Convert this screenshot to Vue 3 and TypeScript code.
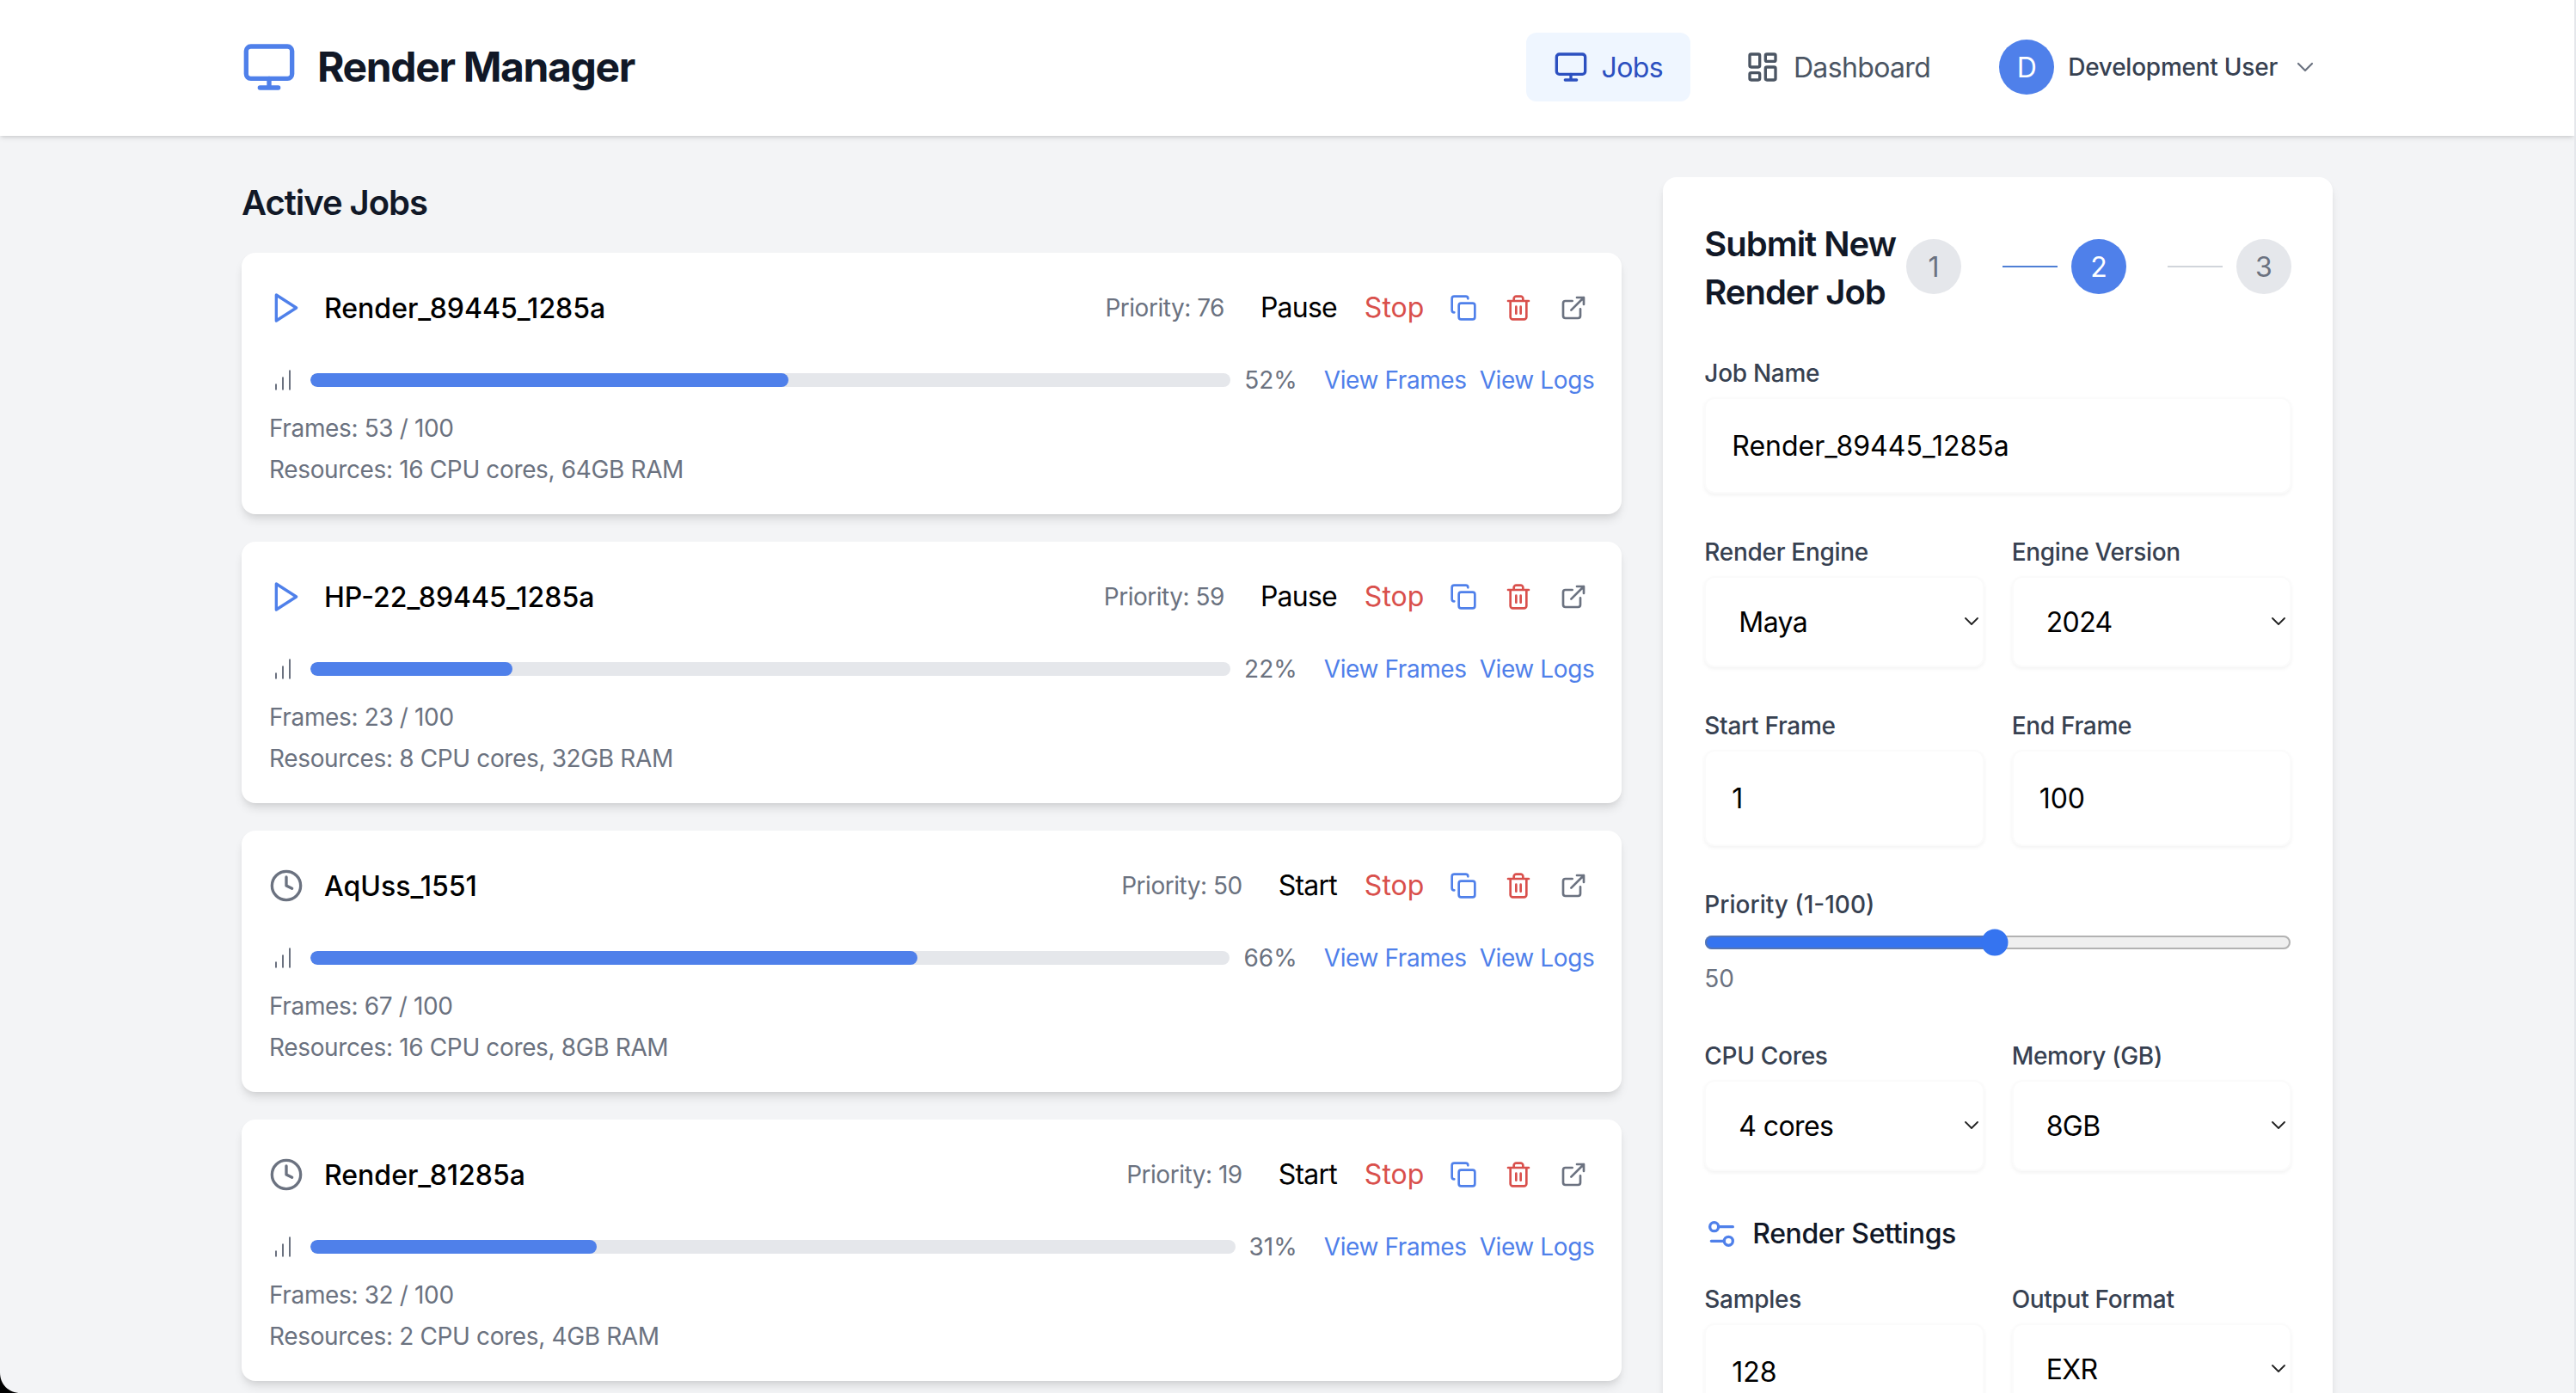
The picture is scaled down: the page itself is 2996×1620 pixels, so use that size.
<script setup lang="ts">
interface Job {
  name: string
  running: boolean
  priority: number
  action: string
  progress: number
  frames: number
  cores: number
  ram: number
}

const jobs: Job[] = [
  { name: 'Render_89445_1285a', running: true, priority: 76, action: 'Pause', progress: 52, frames: 53, cores: 16, ram: 64 },
  { name: 'HP-22_89445_1285a', running: true, priority: 59, action: 'Pause', progress: 22, frames: 23, cores: 8, ram: 32 },
  { name: 'AqUss_1551', running: false, priority: 50, action: 'Start', progress: 66, frames: 67, cores: 16, ram: 8 },
  { name: 'Render_81285a', running: false, priority: 19, action: 'Start', progress: 31, frames: 32, cores: 2, ram: 4 }
]
</script>

<template>
  <div class="page">
    <header class="topbar">
      <div class="topbar-inner">
        <div class="brand">
          <svg class="logo" viewBox="0 0 24 24"><rect x="2" y="3" width="20" height="14" rx="2" /><path d="M8 21h8M12 17v4" /></svg>
          <h1>Render Manager</h1>
        </div>
        <nav class="nav">
          <a class="nav-item active">
            <svg class="nav-icon" viewBox="0 0 24 24"><rect x="2" y="3" width="20" height="14" rx="2" /><path d="M8 21h8M12 17v4" /></svg>
            Jobs
          </a>
          <a class="nav-item">
            <svg class="nav-icon" viewBox="0 0 24 24"><rect x="3" y="3" width="7" height="9" rx="1" /><rect x="14" y="3" width="7" height="5" rx="1" /><rect x="14" y="12" width="7" height="9" rx="1" /><rect x="3" y="16" width="7" height="5" rx="1" /></svg>
            Dashboard
          </a>
          <div class="user">
            <span class="avatar">D</span>
            <span class="user-name">Development User</span>
            <svg class="user-chevron" viewBox="0 0 24 24"><path d="m6 9 6 6 6-6" /></svg>
          </div>
        </nav>
      </div>
    </header>

    <main class="content">
      <section class="jobs">
        <h2 class="heading">Active Jobs</h2>
        <div class="job-list">
          <article v-for="job in jobs" :key="job.name" class="job">
            <div class="job-top">
              <svg v-if="job.running" class="status play" viewBox="0 0 24 24"><polygon points="5 3 19 12 5 21 5 3" /></svg>
              <svg v-else class="status clock" viewBox="0 0 24 24"><circle cx="12" cy="12" r="10" /><path d="M12 6v6l4 2" /></svg>
              <span class="job-name">{{ job.name }}</span>
              <span class="priority">Priority: {{ job.priority }}</span>
              <button class="text-btn">{{ job.action }}</button>
              <button class="text-btn stop">Stop</button>
              <button class="icon-btn copy">
                <svg viewBox="0 0 24 24"><rect x="8" y="8" width="14" height="14" rx="2" /><path d="M4 16c-1.1 0-2-.9-2-2V4c0-1.1.9-2 2-2h10c1.1 0 2 .9 2 2" /></svg>
              </button>
              <button class="icon-btn trash">
                <svg viewBox="0 0 24 24"><path d="M3 6h18M19 6v14c0 1-1 2-2 2H7c-1 0-2-1-2-2V6M8 6V4c0-1 1-2 2-2h4c1 0 2 1 2 2v2M10 11v6M14 11v6" /></svg>
              </button>
              <button class="icon-btn ext">
                <svg viewBox="0 0 24 24"><path d="M18 13v6a2 2 0 0 1-2 2H5a2 2 0 0 1-2-2V8a2 2 0 0 1 2-2h6M15 3h6v6M10 14 21 3" /></svg>
              </button>
            </div>
            <div class="job-progress">
              <svg class="bars" viewBox="0 0 24 24"><path d="M12 20V10M18 20V4M6 20v-4" /></svg>
              <div class="track"><div class="fill" :style="{ width: job.progress + '%' }"></div></div>
              <span class="percent">{{ job.progress }}%</span>
              <a class="link first">View Frames</a>
              <a class="link">View Logs</a>
            </div>
            <div class="job-info">
              <p>Frames: {{ job.frames }} / 100</p>
              <p>Resources: {{ job.cores }} CPU cores, {{ job.ram }}GB RAM</p>
            </div>
          </article>
        </div>
      </section>

      <aside class="form-card">
        <div class="form-head">
          <h2 class="heading">Submit New Render Job</h2>
          <div class="stepper">
            <span class="step">1</span>
            <span class="line on"></span>
            <span class="step on">2</span>
            <span class="line"></span>
            <span class="step">3</span>
          </div>
        </div>

        <label class="field">
          <span class="label">Job Name</span>
          <input class="control" type="text" value="Render_89445_1285a" />
        </label>

        <div class="two">
          <label class="field">
            <span class="label">Render Engine</span>
            <span class="select-wrap">
              <select class="control select"><option>Maya</option></select>
              <svg class="select-chevron" viewBox="0 0 16 10"><path d="m1 1 7 7 7-7" /></svg>
            </span>
          </label>
          <label class="field">
            <span class="label">Engine Version</span>
            <span class="select-wrap">
              <select class="control select"><option>2024</option></select>
              <svg class="select-chevron" viewBox="0 0 16 10"><path d="m1 1 7 7 7-7" /></svg>
            </span>
          </label>
        </div>

        <div class="two">
          <label class="field">
            <span class="label">Start Frame</span>
            <input class="control" type="number" value="1" />
          </label>
          <label class="field">
            <span class="label">End Frame</span>
            <input class="control" type="number" value="100" />
          </label>
        </div>

        <div class="field">
          <span class="label priority-label">Priority (1-100)</span>
          <input class="range" type="range" min="1" max="100" value="50" />
          <span class="range-value">50</span>
        </div>

        <div class="two">
          <label class="field">
            <span class="label">CPU Cores</span>
            <span class="select-wrap">
              <select class="control select"><option>4 cores</option></select>
              <svg class="select-chevron" viewBox="0 0 16 10"><path d="m1 1 7 7 7-7" /></svg>
            </span>
          </label>
          <label class="field">
            <span class="label">Memory (GB)</span>
            <span class="select-wrap">
              <select class="control select"><option>8GB</option></select>
              <svg class="select-chevron" viewBox="0 0 16 10"><path d="m1 1 7 7 7-7" /></svg>
            </span>
          </label>
        </div>

        <div class="settings-title">
          <svg viewBox="0 0 24 24"><path d="M20 7h-9M14 17H5" /><circle cx="17" cy="17" r="3" /><circle cx="7" cy="7" r="3" /></svg>
          <h3>Render Settings</h3>
        </div>

        <div class="two">
          <label class="field">
            <span class="label">Samples</span>
            <input class="control" type="number" value="128" />
          </label>
          <label class="field">
            <span class="label">Output Format</span>
            <span class="select-wrap">
              <select class="control select"><option>EXR</option></select>
              <svg class="select-chevron" viewBox="0 0 16 10"><path d="m1 1 7 7 7-7" /></svg>
            </span>
          </label>
        </div>
      </aside>
    </main>

    <div class="edge"></div>
    <svg class="corner" viewBox="0 0 12 12"><path d="M0 0C0 7 5 12 12 12H0Z" /></svg>
  </div>
</template>

<style>
html, body { margin: 0; background: #f3f4f6; overflow: hidden; }
</style>

<style scoped>
.page {
  zoom: 2;
  position: relative;
  box-sizing: border-box;
  width: 1498px;
  height: 810px;
  padding-right: 1px;
  overflow: hidden;
  background: #f3f4f6;
  color: #111827;
  font-family: Inter, "Liberation Sans", sans-serif;
}
svg { fill: none; stroke: currentColor; stroke-width: 2; stroke-linecap: round; stroke-linejoin: round; display: block; flex: none; }

.topbar { height: 79px; background: #fff; box-shadow: 0 1px 3px rgba(0, 0, 0, .12), 0 1px 2px -1px rgba(0, 0, 0, .1); position: relative; }
.topbar-inner { width: 1216px; height: 78px; margin: 0 auto; display: flex; align-items: center; justify-content: space-between; }
.brand { display: flex; align-items: center; gap: 12px; }
.logo { width: 32px; height: 32px; color: #4f80ea; }
h1 { margin: 0; font-size: 24px; line-height: 32px; font-weight: 700; color: #111827; letter-spacing: -0.68px; }
.nav { display: flex; align-items: center; gap: 16px; }
.nav-item { display: flex; align-items: center; gap: 8px; height: 40px; padding: 0 16px; border-radius: 6px; font-size: 16px; color: #4b5563; letter-spacing: -0.32px; }
.nav-item.active { background: #eff6ff; color: #2c50c0; }
.nav-icon { width: 20px; height: 20px; }
.user { display: flex; align-items: center; padding: 0 8px; }
.avatar { width: 32px; height: 32px; border-radius: 50%; background: #4f80ea; color: #fff; font-size: 16px; display: flex; align-items: center; justify-content: center; }
.user-name { margin-left: 8px; font-size: 14px; font-weight: 500; color: #374151; letter-spacing: -0.12px; }
.user-chevron { width: 16px; height: 16px; margin-left: 8px; color: #6b7280; stroke-width: 1.6; }

.content { width: 1216px; margin: 0 auto; padding-top: 24px; display: grid; grid-template-columns: repeat(3, minmax(0, 1fr)); gap: 24px; align-items: start; }
.jobs { grid-column: span 2; }
.heading { margin: 0; padding-top: 1px; margin-bottom: -1px; font-size: 20px; line-height: 28px; font-weight: 600; color: #111827; letter-spacing: -0.52px; }
.job-list { margin-top: 16px; display: flex; flex-direction: column; gap: 16px; }
.job { background: #fff; border-radius: 8px; padding: 16px; box-shadow: 0 4px 6px -1px rgba(0, 0, 0, .1), 0 2px 4px -2px rgba(0, 0, 0, .1); }
.job-top { display: flex; align-items: center; height: 32px; }
.status { width: 20px; height: 20px; margin-right: 12px; }
.play { color: #4f80ea; }
.clock { color: #6b7280; }
.job-name { flex: 1; font-size: 16px; font-weight: 500; color: #000; }
.priority { font-size: 14px; color: #6b7280; margin-right: 13px; letter-spacing: -0.24px; }
.text-btn { border: 0; background: none; padding: 4px 8px; font: inherit; font-size: 16px; line-height: 24px; color: #000; letter-spacing: -0.4px; }
.text-btn.stop { color: #d9504c; margin-right: 3px; letter-spacing: 0; }
.icon-btn { border: 0; background: none; padding: 4px; margin-left: 8px; }
.text-btn.stop + .icon-btn { margin-left: 0; }
.icon-btn svg { width: 16px; height: 16px; }
.copy { color: #4f80ea; }
.trash { color: #d9504c; }
.ext { color: #6b7280; }
.job-progress { display: flex; align-items: center; height: 20px; margin-top: 16px; font-size: 14px; }
.bars { width: 16px; height: 16px; margin-right: 8px; color: #6b7280; stroke-width: 1.5; }
.track { flex: 1; height: 8px; border-radius: 4px; background: #e5e7eb; overflow: hidden; }
.fill { height: 100%; border-radius: 4px; background: #4f80ea; }
.percent { margin-left: 8px; color: #6b7280; }
.link { color: #4f80ea; margin-left: 7.5px; letter-spacing: -0.2px; }
.link.first { margin-left: 15.5px; }
.job-info { margin-top: 8px; font-size: 14px; line-height: 20px; color: #6b7280; display: flex; flex-direction: column; gap: 4px; letter-spacing: -0.18px; }
.job-info p { margin: 0; }

.form-card { background: #fff; border-radius: 8px; padding: 24px; box-shadow: 0 4px 6px -1px rgba(0, 0, 0, .1), 0 2px 4px -2px rgba(0, 0, 0, .1); display: flex; flex-direction: column; gap: 24px; min-height: 800px; }
.form-head { display: flex; align-items: center; justify-content: space-between; }
.form-head .heading { width: 114px; }
.stepper { display: flex; align-items: center; }
.step { width: 32px; height: 32px; border-radius: 50%; background: #e5e7eb; color: #6b7280; font-size: 16px; display: flex; align-items: center; justify-content: center; }
.step.on { background: #4f80ea; color: #fff; }
.line { width: 32px; height: 1px; margin: 0 8px 0 24px; background: #d1d5db; }
.line.on { background: #4f7fd5; }
.two { display: grid; grid-template-columns: 1fr 1fr; gap: 16px; }
.field { display: flex; flex-direction: column; min-width: 0; }
.label { font-size: 14px; line-height: 20px; font-weight: 500; color: #374151; margin-bottom: 4px; letter-spacing: -0.15px; }
.priority-label { letter-spacing: 0; }
.control { box-sizing: border-box; width: 100%; height: 56px; border: 1px solid #fbfbfb; border-radius: 6px; background: #fff; padding: 0 15px; font: inherit; font-size: 16px; color: #000; box-shadow: 0 1px 2px rgba(0, 0, 0, .05); outline: none; appearance: none; -moz-appearance: textfield; }
.control::-webkit-inner-spin-button { display: none; }
.select { height: 53px; padding-left: 19px; letter-spacing: -0.3px; }
.select-wrap { position: relative; display: block; }
.select-chevron { position: absolute; right: 3.5px; top: 24px; width: 8px; height: 5px; color: #222; stroke-width: 1.8; pointer-events: none; }
.range { display: block; width: 100%; height: 16px; margin: 0; accent-color: #3574f0; }
.range-value { margin-top: 3px; margin-bottom: 1px; font-size: 14px; line-height: 20px; color: #6b7280; }
.settings-title { display: flex; align-items: center; gap: 8px; height: 24px; margin-top: .5px; margin-bottom: -8px; color: #4f80ea; }
.settings-title svg { width: 20px; height: 20px; }
h3 { margin: 0; font-size: 16px; line-height: 24px; font-weight: 500; color: #111827; letter-spacing: -0.2px; }

.edge { position: absolute; top: 0; right: 0; bottom: 0; width: 1px; background: #e5e7eb; }
.corner { position: absolute; left: 0; bottom: 0; width: 12px; height: 12px; fill: #000; stroke: none; }
</style>
